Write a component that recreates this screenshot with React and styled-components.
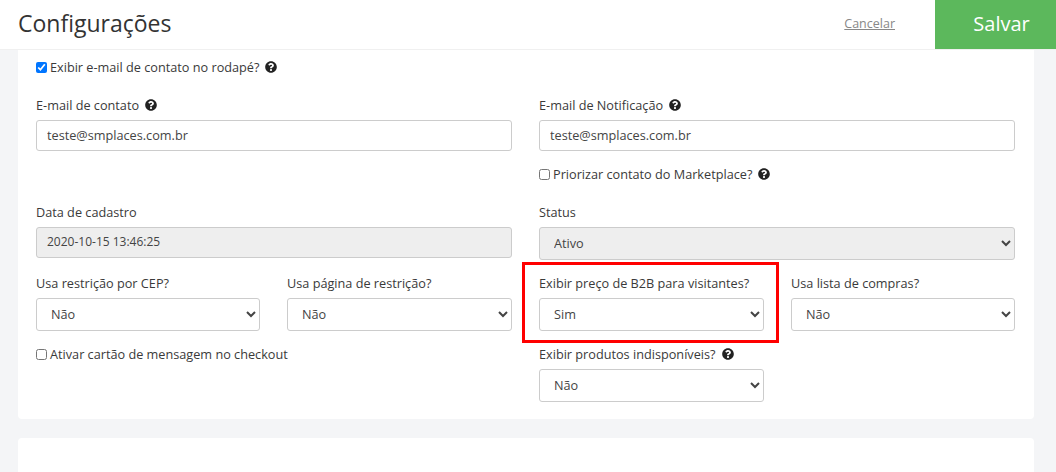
import React from "react";
import styled, { createGlobalStyle } from "styled-components";
import { FaQuestionCircle } from "react-icons/fa";

const GlobalStyle = createGlobalStyle`
  html, body {
    margin: 0;
    height: 472px;
    overflow: hidden;
    background: #f4f5f7;
    font-family: "Open Sans", sans-serif;
    color: #3a3a3a;
  }
  * { box-sizing: border-box; }
`;

const YES_NO = ["Não", "Sim"];

const Help = () => (
  <HelpIcon>
    <FaQuestionCircle size={12} />
  </HelpIcon>
);

const SelectField = ({ label, value, options = YES_NO, help, disabled }) => (
  <Field>
    <Label>
      {label}
      {help && <Help />}
    </Label>
    <Select defaultValue={value} disabled={disabled}>
      {options.map((o) => (
        <option key={o}>{o}</option>
      ))}
    </Select>
  </Field>
);

const App = () => (
  <>
    <GlobalStyle />
    <Header>
      <Title>Configurações</Title>
      <CancelLink href="#">Cancelar</CancelLink>
      <SaveButton>Salvar</SaveButton>
    </Header>
    <Page>
      <Card>
        <CheckLabel>
          <input type="checkbox" defaultChecked />
          Exibir e-mail de contato no rodapé?
          <Help />
        </CheckLabel>

        <Columns $top={21}>
          <Field>
            <Label>
              E-mail de contato
              <Help />
            </Label>
            <Input defaultValue="teste@smplaces.com.br" />
          </Field>
          <Field>
            <Label>
              E-mail de Notificação
              <Help />
            </Label>
            <Input defaultValue="teste@smplaces.com.br" />
            <SubCheck>
              <input type="checkbox" />
              Priorizar contato do Marketplace?
              <Help />
            </SubCheck>
          </Field>
        </Columns>

        <Columns $top={21}>
          <Field>
            <Label>Data de cadastro</Label>
            <Input $small defaultValue="2020-10-15 13:46:25" disabled />
          </Field>
          <SelectField label="Status" value="Ativo" options={["Ativo", "Inativo"]} disabled />
        </Columns>

        <Columns $top={15}>
          <Pair $first={224}>
            <SelectField label="Usa restrição por CEP?" value="Não" />
            <SelectField label="Usa página de restrição?" value="Não" />
          </Pair>
          <Pair $first={225}>
            <Highlighted>
              <SelectField label="Exibir preço de B2B para visitantes?" value="Sim" />
              <RedBox />
            </Highlighted>
            <SelectField label="Usa lista de compras?" value="Não" />
          </Pair>
        </Columns>

        <Columns $top={15}>
          <RowCheck>
            <input type="checkbox" />
            Ativar cartão de mensagem no checkout
          </RowCheck>
          <Pair $first={225}>
            <SelectField label="Exibir produtos indisponíveis?" value="Não" help />
          </Pair>
        </Columns>
      </Card>
      <Card $next />
    </Page>
  </>
);

export default App;

const Header = styled.header`
  height: 50px;
  display: flex;
  align-items: center;
  background: #fff;
  border-bottom: 1px solid #f0f0f0;
`;

const Title = styled.h1`
  flex: 1;
  margin: 0 0 4px 18px;
  font-size: 23px;
  font-weight: 400;
  color: #333;
`;

const CancelLink = styled.a`
  margin: 0 40px 3px 0;
  font-size: 12.5px;
  color: #888;
  text-decoration: underline;
`;

const SaveButton = styled.button`
  width: 121px;
  height: 49px;
  align-self: flex-start;
  border: 0;
  padding: 0 0 2px 12px;
  background: #5cb85c;
  color: #fff;
  font-family: inherit;
  font-size: 20px;
`;

const Page = styled.main`
  padding: 0 22px 0 18px;
`;

const Card = styled.section`
  background: #fff;
  border-radius: 0 0 4px 4px;
  height: 369px;
  padding: 8px 19px 0 18px;

  ${({ $next }) =>
    $next &&
    `
    margin-top: 19px;
    border-radius: 4px 4px 0 0;
    height: 34px;
  `}
`;

const Columns = styled.div`
  display: grid;
  grid-template-columns: 476px 476px;
  column-gap: 27px;
  margin-top: ${({ $top }) => $top}px;
`;

const Pair = styled.div`
  display: grid;
  grid-template-columns: ${({ $first }) => $first}px ${({ $first }) => 449 - $first}px;
  column-gap: 27px;
`;

const Field = styled.div`
  display: flex;
  flex-direction: column;
  min-width: 0;
`;

const Label = styled.label`
  display: flex;
  align-items: center;
  height: 16px;
  margin-bottom: 7px;
  font-size: 12.7px;
  line-height: 16px;
`;

const HelpIcon = styled.span`
  display: inline-flex;
  margin-left: 6px;
  color: #222;
`;

const Input = styled.input`
  width: 100%;
  height: 31px;
  padding: 0 10px 2px;
  border: 1px solid #ccc;
  border-radius: 3px;
  background: #fff;
  color: #444;
  font-family: inherit;
  font-size: ${({ $small }) => ($small ? 12 : 12.7)}px;

  &:disabled {
    background: #eee;
    color: #444;
  }
`;

const Select = styled.select`
  width: 100%;
  height: 33px;
  padding: 0 10px 2px;
  border: 1px solid #ccc;
  border-radius: 3px;
  background: #fff;
  color: #444;
  font-family: inherit;
  font-size: 12.7px;

  &:disabled {
    background: #eee;
    color: #444;
    opacity: 1;
  }
`;

const CheckLabel = styled.label`
  display: flex;
  align-items: center;
  height: 18px;
  font-size: 12.7px;

  input {
    width: 11px;
    height: 11px;
    margin: 0 3px 0 0;
  }
`;

const SubCheck = styled(CheckLabel)`
  margin-top: 14px;
`;

const RowCheck = styled(CheckLabel)`
  height: 16px;
`;

const Highlighted = styled.div`
  position: relative;
`;

const RedBox = styled.div`
  position: absolute;
  top: -13px;
  left: -17px;
  right: -15px;
  bottom: -12px;
  border: 3px solid #f00;
  pointer-events: none;
`;
